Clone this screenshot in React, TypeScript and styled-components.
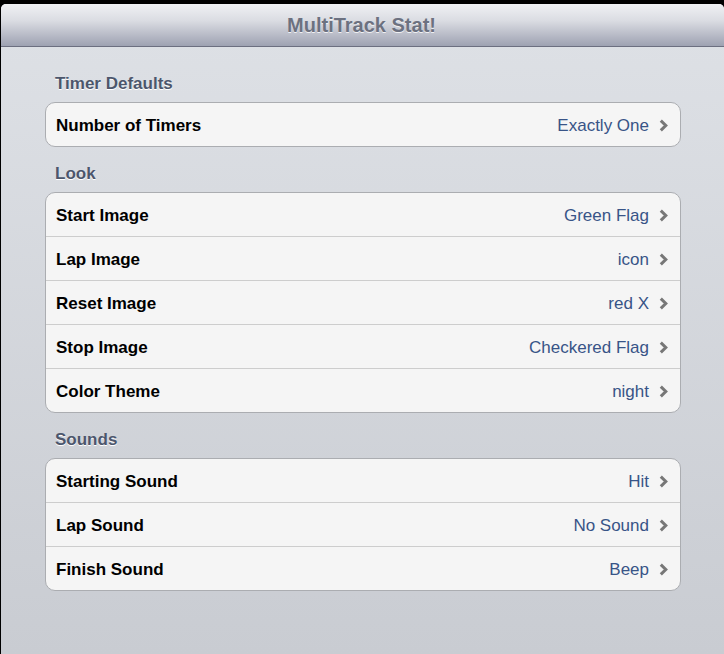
import React from "react";
import styled, { createGlobalStyle } from "styled-components";

const Global = createGlobalStyle`
  html, body { margin: 0; padding: 0; background: #000; height: 100%; }
  #root { height: 100%; }
  * { box-sizing: border-box; }
`;

const Screen = styled.div`
  height: 100vh;
  padding: 4px 0 0 1px;
  background: #000;
  display: flex;
  flex-direction: column;
`;

const Window = styled.div`
  flex: 1;
  display: flex;
  flex-direction: column;
  border-radius: 5px 5px 0 0;
  overflow: hidden;
  background: linear-gradient(#dee1e6, #c9ccd2);
  font-family: "Liberation Sans", Arial, Helvetica, sans-serif;
`;

const NavBar = styled.div`
  height: 43px;
  flex: none;
  display: flex;
  align-items: center;
  justify-content: center;
  background: linear-gradient(#f0f1f4 0%, #dadce2 40%, #b2b5c2 80%, #9ea2b2 100%);
  border-bottom: 1px solid #6c6f80;
`;

const Title = styled.h1`
  margin: 0 2px 0 0;
  font-size: 20px;
  font-weight: bold;
  color: #6c7180;
  text-shadow: 0 1px 0 rgba(255, 255, 255, 0.8);
`;

const Content = styled.div`
  padding: 20px 43px 0 44px;
  display: flex;
  flex-direction: column;
`;

const SectionHeader = styled.div`
  height: 35px;
  padding: 7px 0 0 10px;
  font-size: 17px;
  font-weight: bold;
  color: #4c566c;
  text-shadow: 0 1px 0 #fff;
  line-height: 20px;
`;

const Group = styled.div`
  background: #f5f5f5;
  border: 1px solid #abadb1;
  border-radius: 10px;
  margin-bottom: 10px;
  overflow: hidden;
`;

const Row = styled.div`
  height: 44px;
  display: flex;
  align-items: center;
  padding: 2px 12px 0 10px;
  border-top: 1px solid #cdcdcd;
  &:first-child { border-top: none; height: 43px; }
`;

const Label = styled.span`
  flex: 1;
  font-size: 17px;
  font-weight: bold;
  color: #000;
`;

const Value = styled.span`
  font-size: 17px;
  color: #385487;
  margin-right: 10px;
`;

const Chevron = () => (
  <svg width="9" height="13" viewBox="0 0 9 13">
    <path d="M1.8 1.6 L6.8 6.5 L1.8 11.4" fill="none" stroke="#777" strokeWidth="3" />
  </svg>
);

const sections = [
  { title: "Timer Defaults", rows: [["Number of Timers", "Exactly One"]] },
  {
    title: "Look",
    rows: [
      ["Start Image", "Green Flag"],
      ["Lap Image", "icon"],
      ["Reset Image", "red X"],
      ["Stop Image", "Checkered Flag"],
      ["Color Theme", "night"],
    ],
  },
  {
    title: "Sounds",
    rows: [
      ["Starting Sound", "Hit"],
      ["Lap Sound", "No Sound"],
      ["Finish Sound", "Beep"],
    ],
  },
];

export default function App() {
  return (
    <>
      <Global />
      <Screen>
        <Window>
          <NavBar>
            <Title>MultiTrack Stat!</Title>
          </NavBar>
          <Content>
            {sections.map((s) => (
              <React.Fragment key={s.title}>
                <SectionHeader>{s.title}</SectionHeader>
                <Group>
                  {s.rows.map(([l, v]) => (
                    <Row key={l}>
                      <Label>{l}</Label>
                      <Value>{v}</Value>
                      <Chevron />
                    </Row>
                  ))}
                </Group>
              </React.Fragment>
            ))}
          </Content>
        </Window>
      </Screen>
    </>
  );
}
